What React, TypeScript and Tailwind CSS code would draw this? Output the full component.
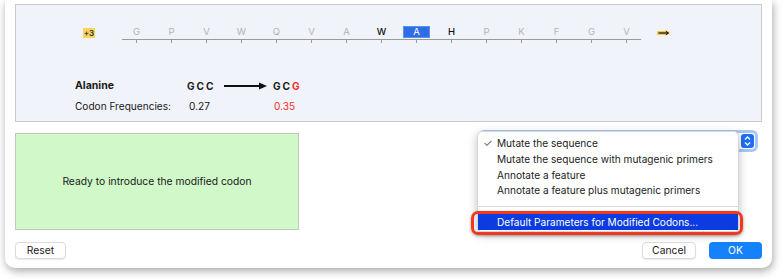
import React from 'react'

const residues = [
    { aa: 'G', tone: 'dim' },
    { aa: 'P', tone: 'dim' },
    { aa: 'V', tone: 'dim' },
    { aa: 'W', tone: 'dim' },
    { aa: 'Q', tone: 'dim' },
    { aa: 'V', tone: 'dim' },
    { aa: 'A', tone: 'dim' },
    { aa: 'W', tone: 'dark' },
    { aa: 'A', tone: 'selected' },
    { aa: 'H', tone: 'dark' },
    { aa: 'P', tone: 'dim' },
    { aa: 'K', tone: 'dim' },
    { aa: 'F', tone: 'dim' },
    { aa: 'G', tone: 'dim' },
    { aa: 'V', tone: 'dim' },
]

const menuItems = [
    { label: 'Mutate the sequence', checked: true },
    { label: 'Mutate the sequence with mutagenic primers' },
    { label: 'Annotate a feature' },
    { label: 'Annotate a feature plus mutagenic primers' },
]

const font = { fontFamily: 'Inter, "Liberation Sans", sans-serif' }

function Ruler() {
    return (
        <div className="flex items-start pl-[67px]">
            {/* frame badge */}
            <div className="mt-[2px] w-[12px] h-[10px] bg-[#fbd35e] text-[8px] leading-[10px] font-semibold text-[#333] text-center">
                +3
            </div>

            <div className="ml-[24px] flex flex-col">
                <div className="flex h-[13px]">
                    {residues.map((r, i) => (
                        <div key={i} className="w-[35px] flex justify-center">
                            {r.tone === 'selected' ? (
                                <div className="w-[27px] h-[12px] bg-[#2f6de6] border border-[#5b8ff0] text-white text-[9.5px] leading-[10px] text-center">
                                    {r.aa}
                                </div>
                            ) : (
                                <span
                                    className={
                                        r.tone === 'dark'
                                            ? 'text-[9.5px] leading-[12px] text-[#111] font-medium'
                                            : 'text-[9.5px] leading-[12px] text-[#b4b4b4]'
                                    }
                                >
                                    {r.aa}
                                </span>
                            )}
                        </div>
                    ))}
                </div>
                <div className="mx-[3px] h-px bg-[#9a9a9a]" />
                <div className="flex h-[3px]">
                    {residues.map((_, i) => (
                        <div key={i} className="w-[35px] flex justify-center">
                            <div className="w-px h-[3px] bg-[#9a9a9a]" />
                        </div>
                    ))}
                </div>
            </div>

            {/* scroll arrow */}
            <svg className="ml-[13px] mt-[3px]" width="14" height="8" viewBox="0 0 14 8">
                <path d="M1 4 H10" stroke="#f7c948" strokeWidth="4" strokeLinecap="round" />
                <path d="M8 0.8 L13 4 L8 7.2 Z" fill="#f7c948" />
                <path d="M1.5 4 H11" stroke="#1a1a1a" strokeWidth="1.3" />
                <path d="M9 2.4 L11.6 4 L9 5.6" stroke="#1a1a1a" strokeWidth="1" fill="none" />
            </svg>
        </div>
    )
}

function CodonInfo() {
    return (
        <div className="mt-[36px] pl-[59px] grid grid-cols-[112px_86px_auto] gap-y-[6px] text-[10.1px] leading-[14px] text-[#1a1a1a]">
            <div className="font-bold text-[10.5px]">Alanine</div>
            <div className="flex items-center">
                <span className="font-bold tracking-[2px]">GCC</span>
                <svg className="ml-[8px]" width="44" height="8" viewBox="0 0 44 8">
                    <path d="M0 4 H36" stroke="#111" strokeWidth="1.8" />
                    <path d="M35 0.5 L43 4 L35 7.5 Z" fill="#111" />
                </svg>
            </div>
            <div className="font-bold tracking-[2px]">
                GC<span className="text-[#ff2b2b]">G</span>
            </div>

            <div>Codon Frequencies:</div>
            <div className="pl-[2px]">0.27</div>
            <div className="pl-[1px] text-[#ff2b2b]">0.35</div>
        </div>
    )
}

function DropdownMenu() {
    return (
        <>
            <div className="absolute left-[477px] top-[131px] w-[262px] h-[101px] bg-white rounded-[5px] border border-[#d6d6d6] shadow-[0_3px_10px_rgba(0,0,0,0.25)] pt-[4px] text-[10.1px] text-[#222]">
                {menuItems.map((item) => (
                    <div key={item.label} className="relative h-[15.8px] leading-[15.8px] pl-[19px]">
                        {item.checked && (
                            <span className="absolute left-[5px] top-0 text-[11px] text-[#666]">✓</span>
                        )}
                        {item.label}
                    </div>
                ))}
                <div className="mt-[7px] h-px bg-[#d9d9d9]" />
                <div className="mt-[7px] h-[16px] leading-[16px] bg-[#0c3be2] text-white pl-[19px]">
                    Default Parameters for Modified Codons...
                </div>
            </div>
            {/* highlight outline */}
            <div className="absolute left-[471px] top-[211px] w-[272px] h-[24px] rounded-[7px] border-[3px] border-[#ef3a22] shadow-[0_1px_3px_rgba(0,0,0,0.35)]" />
        </>
    )
}

export default function App() {
    return (
        <div className="relative w-[784px] h-[279px] bg-white overflow-hidden" style={font}>
            <div className="ml-[5px] w-[767px] h-[268px] bg-white rounded-b-[10px] shadow-[1px_3px_8px_rgba(0,0,0,0.35)] px-[10px] flex flex-col">
                {/* sequence panel */}
                <div className="mt-[4px] h-[118px] bg-[#f0f3f9] border border-[#cbcbcb] pt-[21px]">
                    <Ruler />
                    <CodonInfo />
                </div>

                <div className="mt-[11px] flex items-start">
                    <div className="w-[284px] h-[97px] bg-[#d1f8c9] border border-[#bccbbb] flex items-center justify-center text-[10.3px] text-[#1a1a1a]">
                        Ready to introduce the modified codon
                    </div>
                    <div className="flex-1 flex justify-end pr-[4px] -mt-[3px]">
                        <div className="w-[280px] h-[22px] rounded-[6px] border-[3px] border-[#a9c7f4] bg-white flex justify-end items-center pr-px">
                            <div className="w-[13px] h-[14px] rounded-[3px] bg-[#1f6ff3] flex items-center justify-center">
                                <svg width="7" height="10" viewBox="0 0 7 10">
                                    <path d="M1 3.5 L3.5 1 L6 3.5 M1 6.5 L3.5 9 L6 6.5" stroke="white" strokeWidth="1.3" fill="none" />
                                </svg>
                            </div>
                        </div>
                    </div>
                </div>

                <div className="mt-[12px] flex items-center text-[10.3px]">
                    <button className="w-[51px] h-[17px] rounded-[4px] bg-white border border-[#dcdcdc] shadow-[0_1px_1px_rgba(0,0,0,0.08)] text-[#1a1a1a] leading-none">
                        Reset
                    </button>
                    <div className="flex-1" />
                    <button className="w-[54px] h-[17px] rounded-[4px] bg-white border border-[#dcdcdc] shadow-[0_1px_1px_rgba(0,0,0,0.08)] text-[#1a1a1a] leading-none">
                        Cancel
                    </button>
                    <button className="ml-[13px] w-[53px] h-[17px] rounded-[4px] bg-[#1581fa] text-white leading-none">
                        OK
                    </button>
                </div>
            </div>

            <DropdownMenu />
        </div>
    )
}
